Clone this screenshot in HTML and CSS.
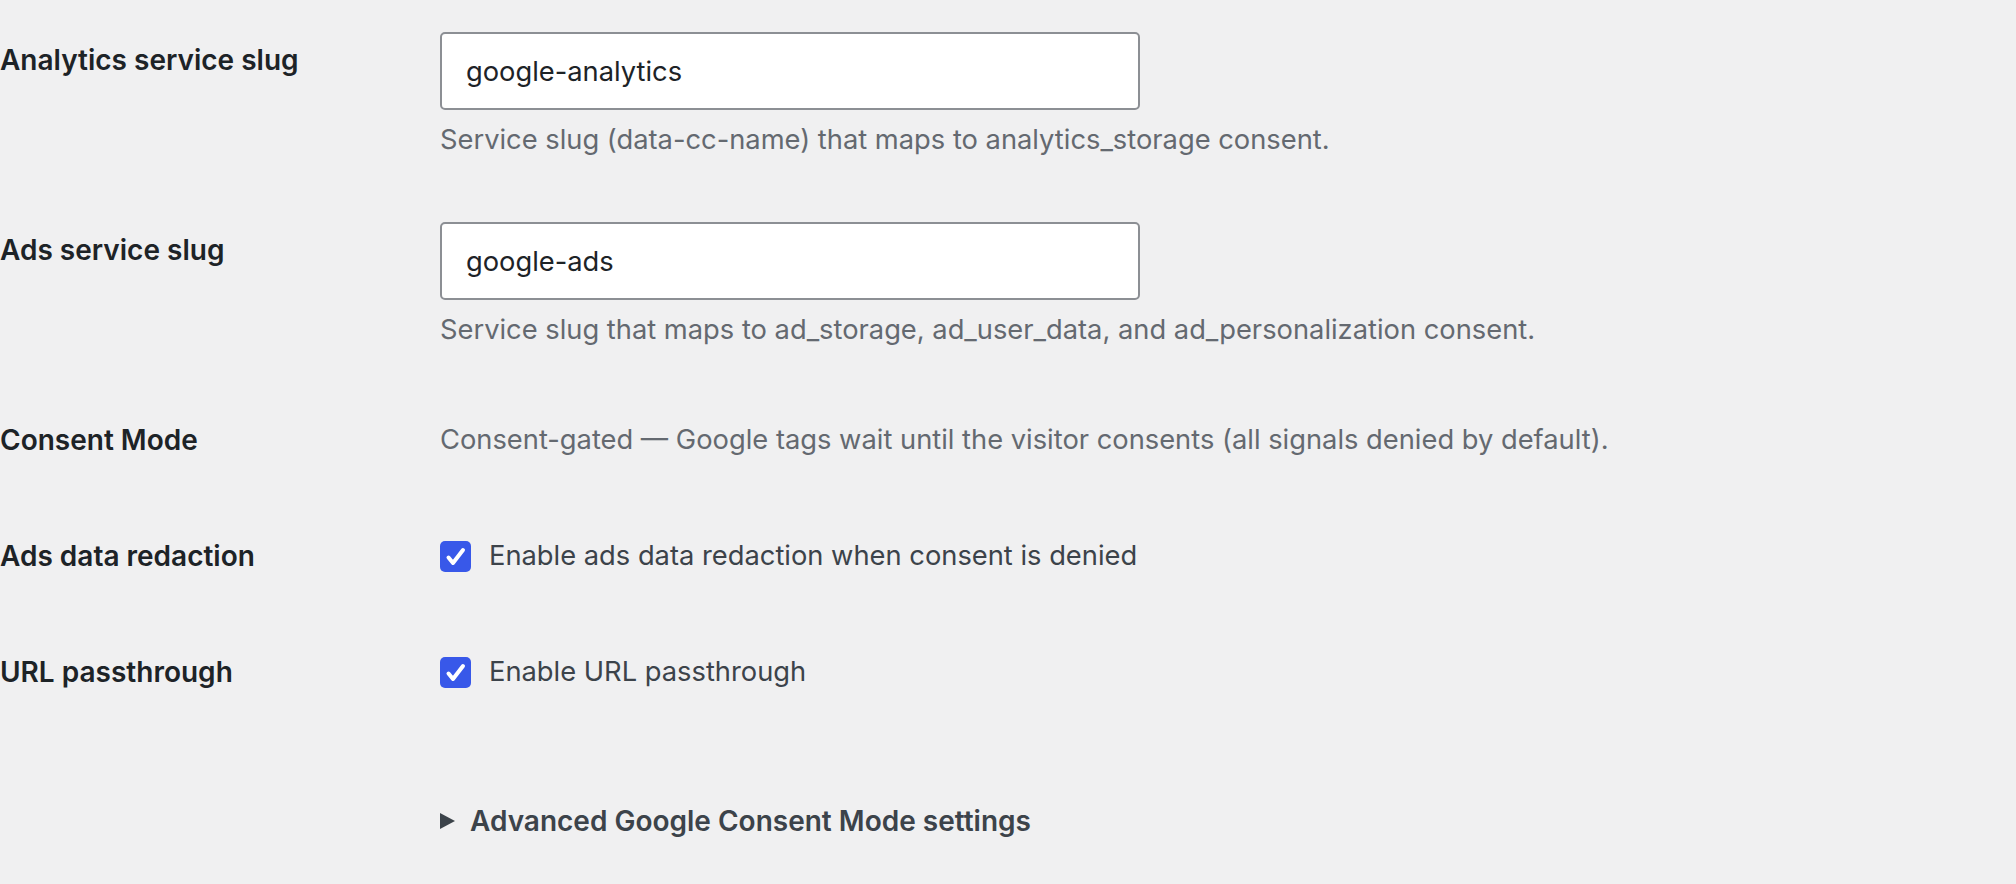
FILE: index.html
```html
<!DOCTYPE html>
<html lang="en">
<head>
    <meta charset="UTF-8">
    <title>Google Consent Mode</title>
    <link rel="stylesheet" href="styles.css">
</head>
<body>

<table class="form-table">
    <tr>
        <th>Analytics service slug</th>
        <td>
            <input type="text" class="regular-text" value="google-analytics">
            <p class="description">Service slug (data-cc-name) that maps to analytics_storage consent.</p>
        </td>
    </tr>
    <tr>
        <th>Ads service slug</th>
        <td>
            <input type="text" class="regular-text" value="google-ads">
            <p class="description">Service slug that maps to ad_storage, ad_user_data, and ad_personalization consent.</p>
        </td>
    </tr>
    <tr>
        <th>Consent Mode</th>
        <td><p class="description mode-text">Consent-gated — Google tags wait until the visitor consents (all signals denied by default).</p></td>
    </tr>
    <tr>
        <th>Ads data redaction</th>
        <td>
            <label class="check-label">
                <span class="checkbox"><svg viewBox="0 0 31 31" width="31" height="31"><path d="M8.5 16.5l4.5 5.5L23 9" fill="none" stroke="#fff" stroke-width="4" stroke-linecap="round" stroke-linejoin="round"/></svg></span>
                Enable ads data redaction when consent is denied
            </label>
        </td>
    </tr>
    <tr>
        <th>URL passthrough</th>
        <td>
            <label class="check-label">
                <span class="checkbox"><svg viewBox="0 0 31 31" width="31" height="31"><path d="M8.5 16.5l4.5 5.5L23 9" fill="none" stroke="#fff" stroke-width="4" stroke-linecap="round" stroke-linejoin="round"/></svg></span>
                Enable URL passthrough
            </label>
        </td>
    </tr>
</table>

<details class="advanced">
    <summary>Advanced Google Consent Mode settings</summary>
</details>

</body>
</html>
```

FILE: styles.css
```css
/* Page de réglages, style admin */
body {
    font-family: Inter, "Noto Sans", sans-serif;
    background-color: #f0f0f1;
    color: #3c434a;
    margin: 0;
    padding-top: 2px;
}

.form-table {
    border-collapse: collapse;
    width: 100%;
}

.form-table th {
    width: 400px;
    padding: 40px 20px 40px 0;
    text-align: left;
    vertical-align: top;
    font-size: 28px;
    font-weight: 600;
    line-height: 36px;
    color: #1d2327;
}

.form-table td {
    padding: 30px 20px;
    vertical-align: middle;
    font-size: 27.3px;
    line-height: 36px;
}

.regular-text {
    display: block;
    box-sizing: border-box;
    width: 700px;
    height: 78px;
    padding: 0 24px;
    margin: 0;
    border: 2px solid #8c8f94;
    border-radius: 5px;
    background: #fff;
    font-family: inherit;
    font-size: 27.3px;
    color: #1d2327;
}

.description {
    margin: 10px 0 2px;
    font-size: 27.3px;
    line-height: 40px;
    color: #646970;
}

.description.mode-text {
    margin: 0;
}

.check-label {
    display: flex;
    align-items: center;
    gap: 18px;
    color: #3c434a;
}

.checkbox {
    display: flex;
    width: 31px;
    height: 31px;
    border-radius: 5px;
    background-color: #3858e9;
}

.advanced {
    margin: 73px 0 0 440px;
}

.advanced summary {
    display: flex;
    align-items: center;
    gap: 15px;
    list-style: none;
    font-size: 28px;
    font-weight: 600;
    line-height: 36px;
    color: #3c434a;
    cursor: pointer;
}

.advanced summary::-webkit-details-marker {
    display: none;
}

/* Petit triangle avant le titre */
.advanced summary::before {
    content: "";
    border-left: 15px solid #3c434a;
    border-top: 8.5px solid transparent;
    border-bottom: 8.5px solid transparent;
}
```
